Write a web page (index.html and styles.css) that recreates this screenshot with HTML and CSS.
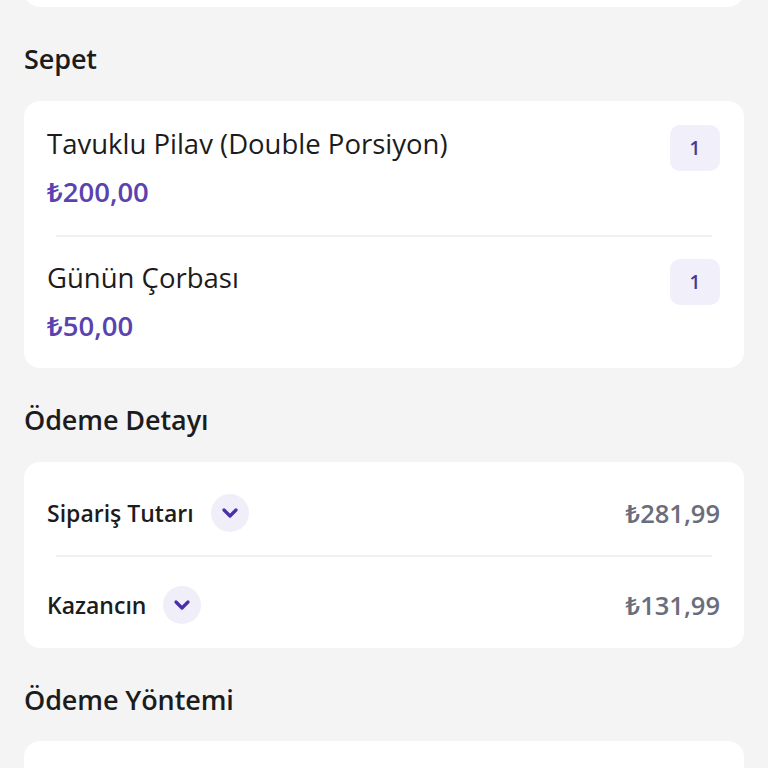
FILE: index.html
```html
<!DOCTYPE html>
<html lang="tr">
<head>
<meta charset="utf-8">
<link rel="stylesheet" href="styles.css">
</head>
<body>
<div class="page">
  <div class="card card-top"></div>

  <h2 class="section-title">Sepet</h2>
  <div class="card">
    <div class="item">
      <div class="item-info">
        <div class="item-name">Tavuklu Pilav (Double Porsiyon)</div>
        <div class="item-price">₺200,00</div>
      </div>
      <div class="qty">1</div>
    </div>
    <div class="divider"></div>
    <div class="item item-last">
      <div class="item-info">
        <div class="item-name">Günün Çorbası</div>
        <div class="item-price">₺50,00</div>
      </div>
      <div class="qty">1</div>
    </div>
  </div>

  <h2 class="section-title">Ödeme Detayı</h2>
  <div class="card">
    <div class="row row-first">
      <div class="row-label">Sipariş Tutarı
        <span class="chev"><svg width="22" height="22" viewBox="0 0 22 22"><path d="M5 8 L11 14 L17 8" fill="none" stroke="#4a2fa6" stroke-width="3.2" stroke-linecap="round" stroke-linejoin="round"/></svg></span>
      </div>
      <div class="row-value">₺281,99</div>
    </div>
    <div class="divider"></div>
    <div class="row">
      <div class="row-label">Kazancın
        <span class="chev"><svg width="22" height="22" viewBox="0 0 22 22"><path d="M5 8 L11 14 L17 8" fill="none" stroke="#4a2fa6" stroke-width="3.2" stroke-linecap="round" stroke-linejoin="round"/></svg></span>
      </div>
      <div class="row-value">₺131,99</div>
    </div>
  </div>

  <h2 class="section-title section-title-last">Ödeme Yöntemi</h2>
  <div class="card card-bottom"></div>
</div>
</body>
</html>
```

FILE: styles.css
```css
* { box-sizing: border-box; }
html, body { margin: 0; padding: 0; }
body {
  background: #f4f4f4;
  font-family: "Open Sans", "Noto Sans", sans-serif;
  color: #1c1c1c;
  overflow: hidden;
  height: 768px;
}
.page {
  padding: 0 24px;
  display: flex;
  flex-direction: column;
}
.card {
  background: #ffffff;
  border-radius: 16px;
}
.card-top {
  height: 40px;
  margin-top: -33px;
}
.card-bottom {
  height: 60px;
}
.section-title {
  margin: 0;
  font-size: 27px;
  font-weight: 600;
  line-height: 36px;
  padding: 34px 0 0;
  height: 94px;
  letter-spacing: -0.1px;
}
.section-title-last { height: 93px; padding-top: 34px; }
.item {
  display: flex;
  justify-content: space-between;
  align-items: flex-start;
  padding: 24px 24px 0 23px;
  height: 134px;
}
.item-last { height: 131px; padding-top: 22px; }
.item-name {
  font-size: 27.5px;
  line-height: 38px;
  font-weight: 400;
  color: #1c1c1c;
}
.item-price {
  font-size: 27.5px;
  line-height: 36px;
  font-weight: 600;
  color: #5a42b0;
  margin-top: 11px;
}
.qty {
  width: 50px;
  height: 46px;
  border-radius: 10px;
  background: #f1eff9;
  color: #463a92;
  font-size: 19px;
  font-weight: 600;
  display: flex;
  align-items: center;
  justify-content: center;
}
.divider {
  height: 2px;
  background: #f0f0f2;
  margin: 0 32px;
}
.row {
  display: flex;
  align-items: center;
  justify-content: space-between;
  padding: 4px 24px 0 23px;
  height: 91px;
}
.row-first { height: 93px; padding-top: 8px; }
.row-label {
  display: flex;
  align-items: center;
  gap: 17px;
  font-size: 23px;
  font-weight: 600;
  color: #1c1c1c;
}
.chev {
  width: 38px;
  height: 38px;
  border-radius: 50%;
  background: #f0eef9;
  display: flex;
  align-items: center;
  justify-content: center;
}
.row-value {
  font-size: 25.5px;
  font-weight: 600;
  color: #696e7d;
}
```
